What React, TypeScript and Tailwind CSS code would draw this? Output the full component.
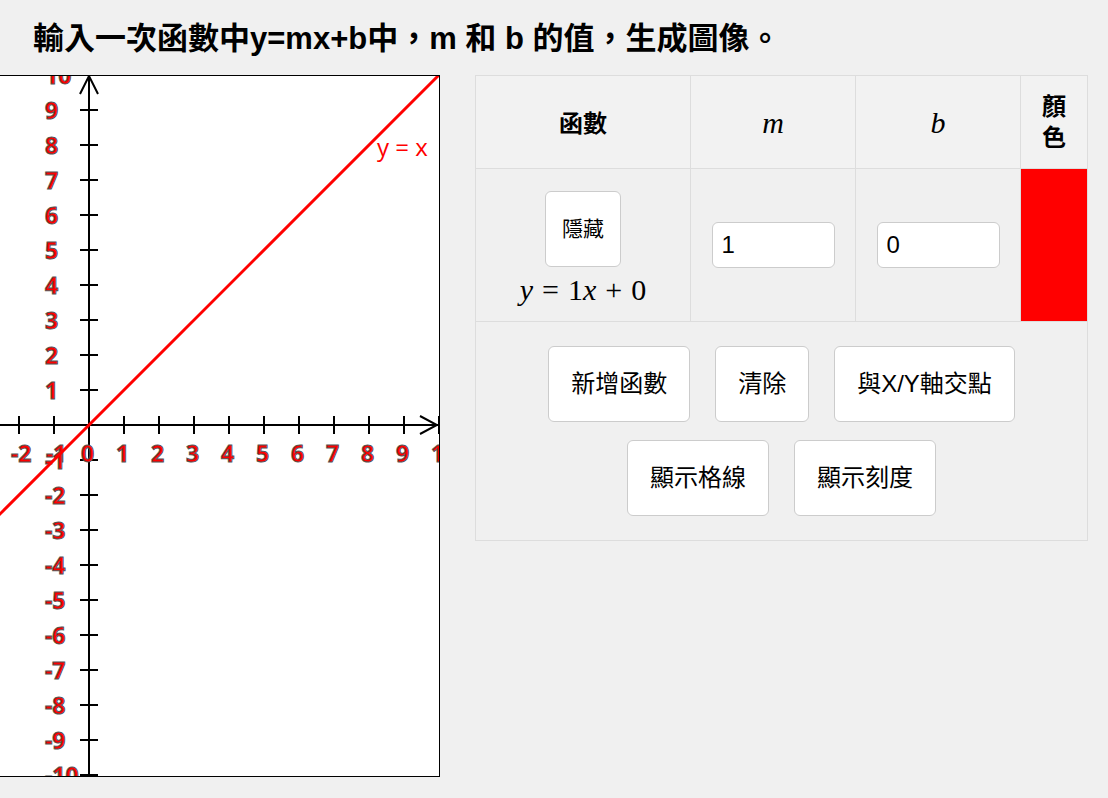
import { useState } from 'react';

const UI_FONT = '"Liberation Sans", "Noto Sans CJK TC", sans-serif';
const MATH_FONT = '"Liberation Serif", "Noto Serif", serif';

// one unit on the graph = 35px, origin of the drawing sits at (89, 349)
const UNIT = 35;
const OX = 89;
const OY = 349;
const ticks = Array.from({ length: 21 }, (_, i) => i - 10);

function Graph({ m, b }: { m: number; b: number }) {
  const x1 = -10;
  const x2 = 10;
  return (
    <div className="w-[440px] h-[702px] shrink-0 border-y border-r border-black bg-white overflow-hidden">
      <svg width={439} height={700} className="block overflow-hidden">
        {/* axes */}
        <line x1={-300} y1={OY} x2={438} y2={OY} stroke="#000" strokeWidth={2} />
        <line x1={OX} y1={0} x2={OX} y2={700} stroke="#000" strokeWidth={2} />
        <polyline points={`80,18 ${OX},0 98,18`} fill="none" stroke="#000" strokeWidth={2} />
        <polyline points={`420,340 437,${OY} 420,358`} fill="none" stroke="#000" strokeWidth={2} />

        {ticks.map((t) =>
          t === 0 ? null : (
            <g key={'t' + t}>
              <line x1={OX + t * UNIT} y1={OY - 9} x2={OX + t * UNIT} y2={OY + 9} stroke="#000" strokeWidth={2} />
              <line x1={OX - 9} y1={OY - t * UNIT} x2={OX + 9} y2={OY - t * UNIT} stroke="#000" strokeWidth={2} />
            </g>
          )
        )}

        {/* labels */}
        <g
          fill="#ff0000"
          stroke="#555"
          strokeWidth={1}
          style={{ fontFamily: '"Noto Sans", "Open Sans", sans-serif', fontWeight: 700, fontSize: 23 }}
        >
          {ticks.map((t) => (
            <text key={'x' + t} x={OX + t * UNIT - 8} y={OY + 37}>
              {t}
            </text>
          ))}
          {ticks.map((t) =>
            t === 0 ? null : (
              <text key={'y' + t} x={45} y={OY - t * UNIT + 9}>
                {t}
              </text>
            )
          )}
        </g>

        {/* function */}
        <line
          x1={OX + x1 * UNIT}
          y1={OY - (m * x1 + b) * UNIT}
          x2={OX + x2 * UNIT}
          y2={OY - (m * x2 + b) * UNIT}
          stroke="#ff0000"
          strokeWidth={3}
        />
        <text
          x={377}
          y={80}
          fill="#ff0000"
          style={{ fontFamily: '"Open Sans", "Noto Sans", sans-serif', fontSize: 24 }}
        >
          y = x
        </text>
      </svg>
    </div>
  );
}

function Btn({ children }: { children: React.ReactNode }) {
  return (
    <button className="bg-white border border-[#cccccc] rounded-[6px] px-[22px] py-[21px] text-[24px] leading-[32px] text-black">
      {children}
    </button>
  );
}

export default function App() {
  const [m, setM] = useState('1');
  const [b, setB] = useState('0');

  return (
    <div className="min-h-screen bg-[#f0f0f0] text-black" style={{ fontFamily: UI_FONT }}>
      <h1 className="pl-[33px] pt-[21px] pb-[18px] text-[31px] leading-[36px] font-bold">
        輸入一次函數中y=mx+b中，m 和 b 的值，生成圖像。
      </h1>

      <div className="flex items-start gap-[35px]">
        <Graph m={Number(m) || 0} b={Number(b) || 0} />

        <table className="table-fixed border-collapse w-[612px] border border-[#dddddd]">
          <colgroup>
            <col className="w-[215px]" />
            <col className="w-[165px]" />
            <col className="w-[165px]" />
            <col className="w-[67px]" />
          </colgroup>
          <thead>
            <tr className="h-[93px] bg-[#f2f2f2]">
              <th className="border border-[#dddddd] pt-[3px] text-[24px] font-bold">函數</th>
              <th className="border border-[#dddddd] text-[30px] font-normal italic" style={{ fontFamily: MATH_FONT }}>
                m
              </th>
              <th className="border border-[#dddddd] text-[30px] font-normal italic" style={{ fontFamily: MATH_FONT }}>
                b
              </th>
              <th className="border border-[#dddddd] px-[15px] text-[24px] leading-[31px] font-bold">顏色</th>
            </tr>
          </thead>
          <tbody>
            <tr className="h-[153px]">
              <td className="border border-[#dddddd] align-top pt-[22px] text-center">
                <button className="mx-auto flex items-center justify-center w-[76px] h-[76px] bg-white border border-[#cccccc] rounded-[6px] text-[21px]">
                  隱藏
                </button>
                <div className="mt-[7px] text-[30px] leading-[32px]" style={{ fontFamily: MATH_FONT }}>
                  <i>y</i>
                  <span className="mx-[9px]">=</span>1<i>x</i>
                  <span className="mx-[9px]">+</span>0
                </div>
              </td>
              <td className="border border-[#dddddd] text-center">
                <input
                  value={m}
                  onChange={(e) => setM(e.target.value)}
                  className="w-[123px] h-[46px] bg-white border border-[#cccccc] rounded-[6px] pl-[9px] text-[24px] outline-none"
                />
              </td>
              <td className="border border-[#dddddd] text-center">
                <input
                  value={b}
                  onChange={(e) => setB(e.target.value)}
                  className="w-[123px] h-[46px] bg-white border border-[#cccccc] rounded-[6px] pl-[9px] text-[24px] outline-none"
                />
              </td>
              <td className="border border-[#dddddd] bg-[#ff0000]"></td>
            </tr>
            <tr>
              <td colSpan={4} className="border border-[#dddddd] py-[24px] px-[10px]">
                <div className="flex flex-wrap justify-center gap-x-[25px] gap-y-[18px]">
                  <Btn>新增函數</Btn>
                  <Btn>清除</Btn>
                  <Btn>與X/Y軸交點</Btn>
                  <Btn>顯示格線</Btn>
                  <Btn>顯示刻度</Btn>
                </div>
              </td>
            </tr>
          </tbody>
        </table>
      </div>
    </div>
  );
}
